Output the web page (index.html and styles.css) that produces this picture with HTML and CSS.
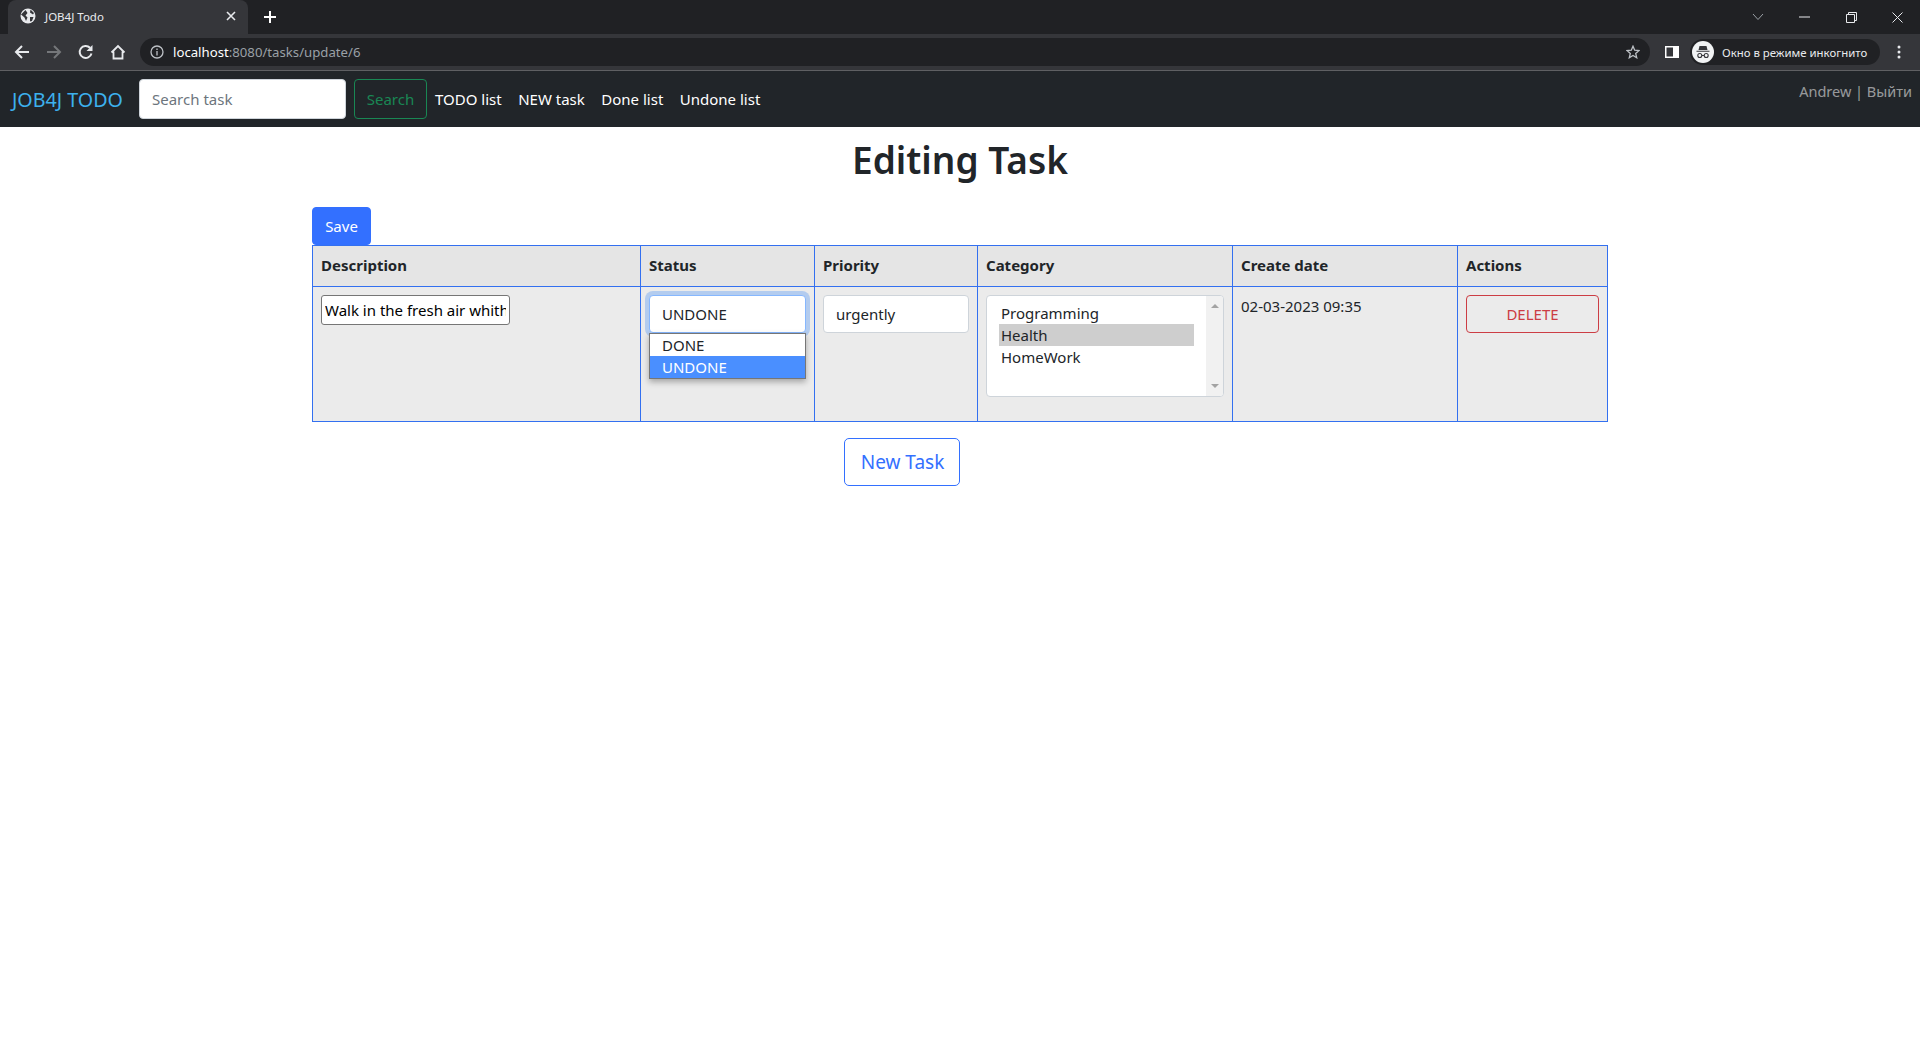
FILE: index.html
```html
<!DOCTYPE html>
<html lang="en">
<head>
    <meta charset="UTF-8">
    <title>JOB4J Todo</title>
    <link rel="stylesheet" href="styles.css">
</head>
<body>

    <!-- browser window top -->
    <div class="tabstrip">
        <div class="tab">
            <svg class="tab-globe" width="16" height="16" viewBox="0 0 16 16"><circle cx="8" cy="8" r="7.500" fill="#e8eaed"/><path d="M1 6.500 4.500 9.500 6 13 7.500 9.500 5.500 7.500 7.500 5 5.500 2ZM10.500 1.500 10 4.500 13 6.500 14 5ZM10 9 13.500 9 12 13 10 13.500Z" fill="#35363a"/></svg>
            <span class="tab-title">JOB4J Todo</span>
            <svg class="tab-close" width="10" height="10" viewBox="0 0 10 10"><path d="M1 1 9 9M9 1 1 9" stroke="#e8eaed" stroke-width="1.600"/></svg>
        </div>
        <svg class="tab-new" width="14" height="14" viewBox="0 0 14 14"><path d="M7 1V13M1 7H13" stroke="#fff" stroke-width="2"/></svg>
        <div class="win-controls">
            <svg width="12" height="8" viewBox="0 0 12 8"><path d="M1 1 6 6.500 11 1" fill="none" stroke="#9aa0a6" stroke-width="1"/></svg>
            <svg width="11" height="2" viewBox="0 0 11 2"><path d="M0 1H11" stroke="#e8eaed" stroke-width="1"/></svg>
            <svg width="11" height="11" viewBox="0 0 11 11"><path d="M.5 2.500H8.500V10.500H.5ZM2.500 2.500V.5H10.500V8.500H8.500" fill="none" stroke="#e8eaed" stroke-width="1"/></svg>
            <svg width="11" height="11" viewBox="0 0 11 11"><path d="M.5.5 10.500 10.500M10.500.5.5 10.500" stroke="#e8eaed" stroke-width="1"/></svg>
        </div>
    </div>
    <div class="toolbar">
        <svg width="16" height="16" viewBox="0 0 16 16"><path d="M15 8H2M8 2 2 8 8 14" fill="none" stroke="#e8eaed" stroke-width="2"/></svg>
        <svg width="16" height="16" viewBox="0 0 16 16"><path d="M1 8H14M8 2 14 8 8 14" fill="none" stroke="#75777a" stroke-width="2"/></svg>
        <svg width="16" height="16" viewBox="0 0 16 16"><path d="M13.500 9.500A6 6 0 1 1 12 3.800" fill="none" stroke="#e8eaed" stroke-width="2"/><path d="M14.500 1V7H8.500Z" fill="#e8eaed"/></svg>
        <svg width="16" height="16" viewBox="0 0 16 16"><path d="M1.500 8.500 8 2 14.500 8.500M3.500 7.500V14.500H12.500V7.500" fill="none" stroke="#e8eaed" stroke-width="1.800"/></svg>
        <div class="omnibox">
            <svg width="14" height="14" viewBox="0 0 14 14"><circle cx="7" cy="7" r="6" fill="none" stroke="#bdc1c6" stroke-width="1.300"/><path d="M7 6V10.500M7 3.500V5" stroke="#bdc1c6" stroke-width="1.300"/></svg>
            <span class="url"><b>localhost</b>:8080/tasks/update/6</span>
            <svg class="star" width="14" height="14" viewBox="0 0 14 14"><path d="M7 1.200 8.700 5.200 13 5.600 9.700 8.400 10.700 12.700 7 10.400 3.300 12.700 4.300 8.400 1 5.600 5.300 5.200Z" fill="none" stroke="#bdc1c6" stroke-width="1.300"/></svg>
        </div>
        <svg class="side-icon" width="14" height="12" viewBox="0 0 14 12"><rect width="14" height="12" fill="#fff"/><rect x="1.500" y="1.500" width="6.500" height="9" fill="#35363a"/></svg>
        <div class="incognito">
            <svg width="22" height="22" viewBox="0 0 22 22"><circle cx="11" cy="11" r="11" fill="#f1f3f4"/><path d="M7.500 5H14.500L15.500 9H6.500ZM4.500 9.800H17.500V10.800H4.500Z" fill="#35363a"/><circle cx="7.800" cy="14.500" r="2" fill="none" stroke="#35363a" stroke-width="1.100"/><circle cx="14.200" cy="14.500" r="2" fill="none" stroke="#35363a" stroke-width="1.100"/><path d="M9.800 14.500H12.200" stroke="#35363a"/></svg>
            <span>Окно в режиме инкогнито</span>
        </div>
        <svg class="menu-dots" width="4" height="14" viewBox="0 0 4 14"><circle cx="2" cy="2" r="1.500" fill="#e8eaed"/><circle cx="2" cy="7" r="1.500" fill="#e8eaed"/><circle cx="2" cy="12" r="1.500" fill="#e8eaed"/></svg>
    </div>

    <nav class="navbar">
        <a class="brand">JOB4J TODO</a>
        <input class="search-input" type="text" placeholder="Search task">
        <button class="btn-search">Search</button>
        <a class="nav-link">TODO list</a>
        <a class="nav-link">NEW task</a>
        <a class="nav-link">Done list</a>
        <a class="nav-link">Undone list</a>
        <div class="nav-user">Andrew | Выйти</div>
    </nav>

    <div class="container">
        <h1>Editing Task</h1>
        <button class="btn-save">Save</button>
        <table class="task-table">
            <colgroup>
                <col class="c1"><col class="c2"><col class="c3"><col class="c4"><col class="c5"><col class="c6">
            </colgroup>
            <thead>
                <tr>
                    <th>Description</th>
                    <th>Status</th>
                    <th>Priority</th>
                    <th>Category</th>
                    <th>Create date</th>
                    <th>Actions</th>
                </tr>
            </thead>
            <tbody>
                <tr>
                    <td><input class="desc-input" type="text" value="Walk in the fresh air whith family"></td>
                    <td>
                        <div class="status-wrap">
                            <div class="field focused">UNDONE</div>
                            <div class="status-menu">
                                <div class="status-opt">DONE</div>
                                <div class="status-opt selected">UNDONE</div>
                            </div>
                        </div>
                    </td>
                    <td><div class="field">urgently</div></td>
                    <td>
                        <div class="listbox">
                            <div class="list-items">
                                <div class="list-opt">Programming</div>
                                <div class="list-opt picked">Health</div>
                                <div class="list-opt">HomeWork</div>
                            </div>
                            <div class="scrollbar">
                                <span class="arrow-up"></span>
                                <span class="arrow-down"></span>
                            </div>
                        </div>
                    </td>
                    <td class="date-cell">02-03-2023 09:35</td>
                    <td><button class="btn-delete">DELETE</button></td>
                </tr>
            </tbody>
        </table>
        <div class="new-task-row">
            <button class="btn-new">New Task</button>
        </div>
    </div>

</body>
</html>
```

FILE: styles.css
```css
* {
    box-sizing: border-box;
}
body {
    margin: 0;
    background: #fff;
    color: #212529;
    font-family: "Noto Sans", "Open Sans", sans-serif;
    font-size: 15px;
}

/* browser window */
.tabstrip {
    height: 34px;
    background: #202124;
    display: flex;
    align-items: center;
    padding-left: 8px;
}
.tab {
    width: 240px;
    height: 34px;
    background: #35363a;
    border-radius: 8px 8px 0 0;
    display: flex;
    align-items: center;
    padding: 0 12px 2px 12px;
}
.tab-title {
    margin-left: 9px;
    font-size: 11.500px;
    color: #e8eaed;
    flex: 1;
}
.tab-new {
    margin-left: 15px;
}
.win-controls {
    margin-left: auto;
    width: 168px;
    padding-right: 17px;
    display: flex;
    align-items: center;
    justify-content: space-between;
}
.toolbar {
    height: 37px;
    background: #35363a;
    border-bottom: 1px solid #5f6063;
    display: flex;
    align-items: center;
    padding-left: 14px;
    gap: 16px;
}
.omnibox {
    width: 1510px;
    height: 28px;
    margin-left: -2px;
    background: #202124;
    border-radius: 14px;
    display: flex;
    align-items: center;
    padding: 0 10px;
    gap: 9px;
}
.url {
    flex: 1;
    font-size: 13.200px;
    color: #9aa0a6;
}
.url b {
    font-weight: 400;
    color: #fff;
}
.side-icon {
    margin-left: -1px;
}
.incognito {
    width: 190px;
    height: 26px;
    margin-left: -5px;
    border-radius: 13px;
    background: #202124;
    display: flex;
    align-items: center;
    gap: 8px;
    padding-left: 2px;
    color: #e8eaed;
    font-size: 11.400px;
}
.menu-dots {
    margin-left: 1px;
}

/* navbar */
.navbar {
    height: 56px;
    background: #212529;
    display: flex;
    align-items: center;
    padding-left: 12px;
    position: relative;
}
.brand {
    font-size: 19.700px;
    color: #3db1ee;
    margin-right: 16px;
    width: 111px;
    white-space: nowrap;
}
.search-input {
    width: 207px;
    height: 40px;
    border: 1px solid #ced4da;
    border-radius: 4px;
    padding: 0 12px;
    font: inherit;
    background: #fff;
}
.search-input::placeholder {
    color: #6c757d;
}
.btn-search {
    margin-left: 8px;
    width: 73px;
    height: 40px;
    background: transparent;
    border: 1px solid #198754;
    border-radius: 4px;
    color: #198754;
    font: inherit;
}
.nav-link {
    color: #fff;
    margin-left: 8px;
    margin-right: 8.500px;
    white-space: nowrap;
}
.nav-user {
    position: absolute;
    right: 8px;
    top: 10px;
    font-size: 14.500px;
    color: rgba(255, 255, 255, .55);
}

/* page */
.container {
    width: 1296px;
    margin: 0 auto;
}
h1 {
    margin: 0;
    padding-top: 10px;
    height: 80px;
    font-size: 37px;
    font-weight: 600;
    line-height: 46px;
    text-align: center;
}
.btn-save {
    display: block;
    width: 59px;
    height: 38px;
    background: #3370ff;
    border: 1px solid #3370ff;
    border-radius: 4px;
    color: #fff;
    font: inherit;
    padding: 0;
}
.task-table {
    width: 1295px;
    table-layout: fixed;
    border-collapse: collapse;
    border: 1px solid #3370f0;
}
.c1 { width: 328px; }
.c2 { width: 174px; }
.c3 { width: 163px; }
.c4 { width: 255px; }
.c5 { width: 225px; }
.c6 { width: 150px; }
th,
td {
    border: 1px solid #3370f0;
    padding: 8px;
    text-align: left;
    vertical-align: top;
}
th {
    background: #e5e5e5;
    height: 41px;
    padding-top: 9px;
    font-weight: 700;
}
td {
    background: #ebebeb;
    height: 135px;
}
td.date-cell {
    padding-top: 9px;
}
.desc-input {
    display: block;
    width: 189px;
    height: 30px;
    border: 1px solid #767676;
    border-radius: 3px;
    padding: 1px 3px;
    font: inherit;
    color: #000;
    background: #fff;
}
.field {
    height: 38px;
    border: 1px solid #ced4da;
    border-radius: 4px;
    background: #fff;
    padding: 6px 12px;
    line-height: 24px;
}
.focused {
    border-color: #86b7fe;
    box-shadow: 0 0 0 4px rgba(13, 110, 253, .25);
}
.status-wrap {
    position: relative;
}
.status-menu {
    position: absolute;
    left: 0;
    right: 0;
    top: 38px;
    background: #fff;
    border: 1px solid #767676;
    box-shadow: 0 3px 6px rgba(0, 0, 0, .3);
}
.status-opt {
    height: 22px;
    line-height: 22px;
    padding-left: 12px;
}
.status-opt.selected {
    background: #4a8fff;
    color: #fff;
}
.listbox {
    height: 102px;
    border: 1px solid #ced4da;
    border-radius: 4px;
    background: #fff;
    display: flex;
    overflow: hidden;
}
.list-items {
    width: 219px;
    padding: 6px 12px;
}
.list-opt {
    height: 22px;
    line-height: 22px;
    padding-left: 2px;
}
.list-opt.picked {
    background: #cecece;
}
.scrollbar {
    flex: 1;
    background: #f1f1f1;
    display: flex;
    flex-direction: column;
    justify-content: space-between;
    align-items: center;
    padding: 8px 0;
}
.arrow-up {
    border: 4px solid transparent;
    border-top: 0;
    border-bottom: 4px solid #a3a3a3;
}
.arrow-down {
    border: 4px solid transparent;
    border-bottom: 0;
    border-top: 4px solid #a3a3a3;
}
.btn-delete {
    width: 100%;
    height: 38px;
    background: transparent;
    border: 1px solid #cc3d44;
    border-radius: 4px;
    color: #cc3d44;
    font: inherit;
    padding: 0;
}
.new-task-row {
    width: 50%;
    display: flex;
    justify-content: flex-end;
    margin-top: 16px;
}
.btn-new {
    width: 116px;
    height: 48px;
    background: #fff;
    border: 1px solid #3370ff;
    border-radius: 5px;
    color: #3370ff;
    font: inherit;
    font-size: 19px;
    padding: 0 0 0 1px;
}
```
